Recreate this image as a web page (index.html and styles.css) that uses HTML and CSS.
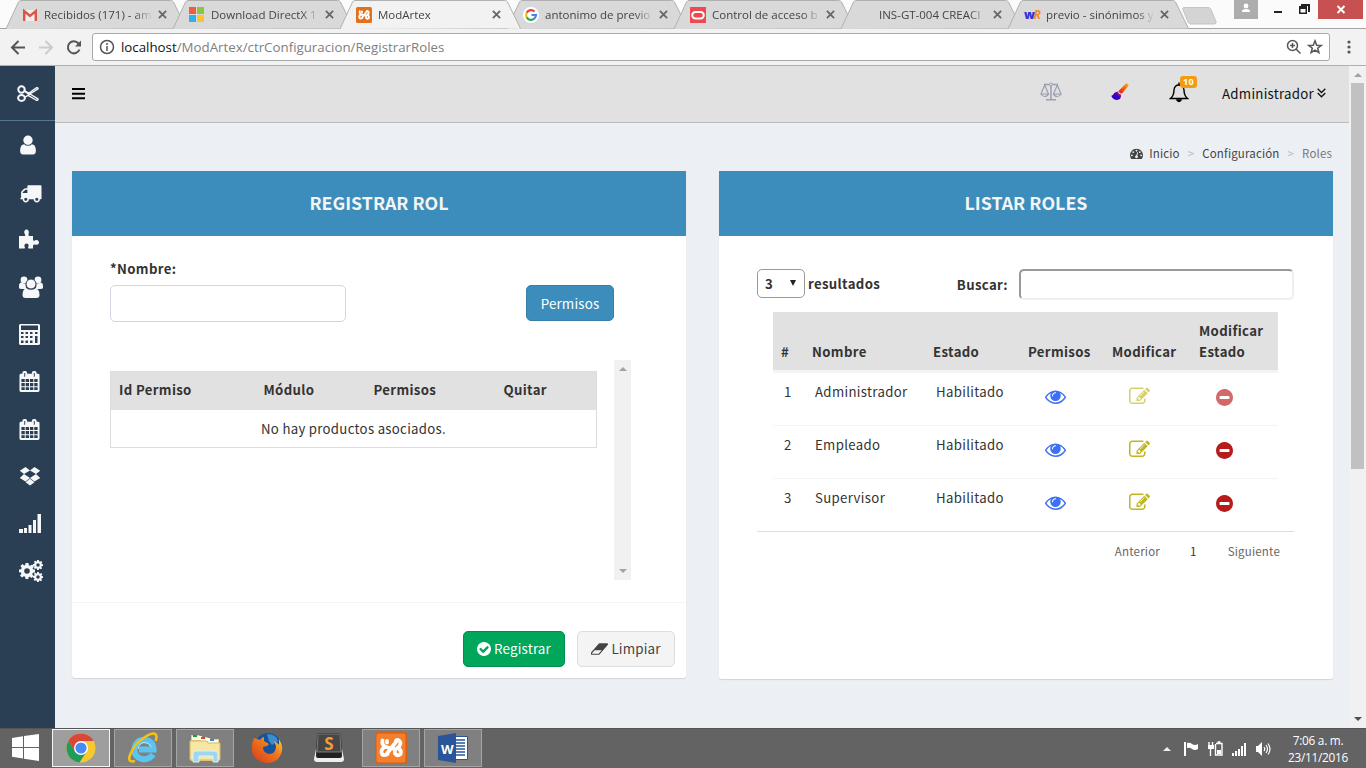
FILE: index.html
```html
<!DOCTYPE html>
<html lang="es">
<head>
<meta charset="utf-8">
<title>ModArtex</title>
<link rel="stylesheet" href="styles.css">
</head>
<body>
<svg class="defs" width="0" height="0">
  <defs>
    <symbol id="tab" viewBox="0 0 182 29"><path d="M0 29L12.500 2Q13.500 .5 15 .5H164.500Q166.500 .5 167.500 2L180.500 28.500"/></symbol>
    <symbol id="close" viewBox="0 0 10 10"><path d="M1 1L9 9M9 1L1 9"/></symbol>
    <symbol id="user" viewBox="0 0 1792 1792"><path d="M1536 1399q0 109-62.500 187t-150.500 78h-854q-88 0-150.500-78t-62.500-187q0-85 8.500-160.500t31.500-152 58.500-131 94-89 134.500-34.500q131 128 313 128t313-128q76 0 134.500 34.500t94 89 58.500 131 31.500 152 8.500 160.500zm-256-887q0 159-112.500 271.500t-271.500 112.500-271.500-112.500-112.500-271.500 112.500-271.500 271.500-112.500 271.500 112.500 112.500 271.500z"/></symbol>
    <symbol id="truck" viewBox="0 0 1792 1792"><path d="M640 1408q0-52-38-90t-90-38-90 38-38 90 38 90 90 38 90-38 38-90zm-384-512h384v-256h-158q-13 0-22 9l-195 195q-9 9-9 22v30zm1280 512q0-52-38-90t-90-38-90 38-38 90 38 90 90 38 90-38 38-90zm256-1088v1024q0 15-4 26.500t-13.500 18.500-16.500 11.500-23.500 6-22.500 2-25.500 0-22.500-.5q0 106-75 181t-181 75-181-75-75-181h-384q0 106-75 181t-181 75-181-75-75-181h-64q-3 0-22.500.5t-25.500 0-22.500-2-23.500-6-16.500-11.500-13.500-18.500-4-26.500q0-26 19-45t45-19v-320q0-8-.5-35t0-38 2.500-34.500 6.500-37 14-30.500 22.500-30l198-198q19-19 50.500-32t58.500-13h160v-192q0-26 19-45t45-19h1024q26 0 45 19t19 45z"/></symbol>
    <symbol id="calendar" viewBox="0 0 21 22"><path fill-rule="evenodd" d="M1.500 3H3V2Q3 0 5 0H6Q8 0 8 2V3H13V2Q13 0 15 0H16Q18 0 18 2V3H19.500Q21 3 21 4.500V20.500Q21 22 19.500 22H1.500Q0 22 0 20.500V4.500Q0 3 1.500 3ZM5 2V6H6V2ZM15 2V6H16V2ZM2 8.500H5.500V11.500H2ZM6.500 8.500H10V11.500H6.500ZM11 8.500H14.500V11.500H11ZM15.500 8.500H19V11.500H15.500ZM2 12.500H5.500V16H2ZM6.500 12.500H10V16H6.500ZM11 12.500H14.500V16H11ZM15.500 12.500H19V16H15.500ZM2 17H5.500V20H2ZM6.500 17H10V20H6.500ZM11 17H14.500V20H11ZM15.500 17H19V20H15.500Z"/></symbol>
    <symbol id="eye" viewBox="0 0 1792 1792"><path d="M1664 960q-152-236-381-353 61 104 61 225 0 185-131.500 316.500t-316.500 131.500-316.500-131.500-131.500-316.500q0-121 61-225-229 117-381 353 133 205 333.500 326.500t434.500 121.500 434.500-121.500 333.500-326.500zm-720-384q0-20-14-34t-34-14q-125 0-214.500 89.500t-89.500 214.500q0 20 14 34t34 14 34-14 14-34q0-86 61-147t147-61q20 0 34-14t14-34zm848 384q0 34-20 69-140 230-376.500 368.500t-499.500 138.500-499.500-139-376.500-368q-20-35-20-69t20-69q140-229 376.500-368t499.500-139 499.500 139 376.500 368q20 35 20 69z"/></symbol>
    <symbol id="edit" viewBox="0 0 1792 1792"><path d="M888 1184l116-116-152-152-116 116v56h96v96h56zm440-720q-16-16-33 1l-350 350q-17 17-1 33t33-1l350-350q17-17 1-33zm80 594v190q0 119-84.500 203.500t-203.500 84.500h-832q-119 0-203.500-84.500t-84.500-203.500v-832q0-119 84.500-203.500t203.500-84.500h832q63 0 117 25 15 7 18 23 3 17-9 29l-49 49q-14 14-32 8-23-6-45-6h-832q-66 0-113 47t-47 113v832q0 66 47 113t113 47h832q66 0 113-47t47-113v-126q0-13 9-22l64-64q15-15 35-7t20 29zm-96-738l288 288-672 672h-288v-288zm444 132l-92 92-288-288 92-92q28-28 68-28t68 28l152 152q28 28 28 68t-28 68z"/></symbol>
    <symbol id="minus" viewBox="128 128 1536 1536"><path d="M1344 960v-128q0-26-19-45t-45-19h-768q-26 0-45 19t-19 45v128q0 26 19 45t45 19h768q26 0 45-19t19-45zm320-64q0 209-103 385.500t-279.500 279.500-385.500 103-385.500-103-279.500-279.500-103-385.500 103-385.500 279.500-279.500 385.500-103 385.500 103 279.500 279.500 103 385.500z"/></symbol>
    <symbol id="gear" viewBox="-10 -10 20 20"><path fill-rule="evenodd" d="M-1.800-10H1.800L2.300-7.300 4-6.600 6.400-8.200 8.800-5.700 7-3.500 7.500-2.100 10-1.700V1.800L7.300 2.300 6.600 4 8.200 6.300 5.700 8.700 3.500 7.100 2 7.500 1.700 10H-1.800L-2.300 7.300-4 6.600-6.300 8.200-8.700 5.700-7 3.500-7.500 2-10 1.700V-1.800L-7.300-2.300-6.600-4-8.200-6.300-5.700-8.700-3.500-7-2.200-7.500ZM0-3.500A3.500 3.500 0 1 0 0 3.500A3.500 3.500 0 1 0 0-3.500Z"/></symbol>
    <symbol id="xampp" viewBox="0 0 32 32"><path d="M12 10.500V9M7.500 8.500Q6.500 13 10.500 15L20 17M12 21.500L21 10M10.500 15Q6 16.500 6.500 20.500Q7.500 25 12.500 22M20 17L20 21.500M21 10Q20.500 7.500 23 8Q27 10 24.500 14L22.500 16Q27 18 25.500 22Q22.500 25 20 21.500" fill="none" stroke="#fff" stroke-width="3.800" stroke-linecap="round" stroke-linejoin="round"/></symbol>
    <linearGradient id="fire" x1="0" y1="1" x2="1" y2="0"><stop offset=".3" stop-color="#30c"/><stop offset=".45" stop-color="#d02040"/><stop offset=".65" stop-color="#ff4a00"/><stop offset="1" stop-color="#ffb400"/></linearGradient>
    <linearGradient id="fox" x1="0" y1="1" x2="1" y2="0"><stop offset="0" stop-color="#d6381a"/><stop offset=".6" stop-color="#f07a1c"/><stop offset="1" stop-color="#ffd83a"/></linearGradient>
  </defs>
</svg>

<div class="browser">
  <div class="tabstrip">
    <div class="tab"><svg class="tab-shape"><use href="#tab"/></svg>
      <svg class="favicon" viewBox="0 0 16 16"><path fill="#f2eded" d="M1 3H15V14H1Z"/><path fill="none" stroke="#d9564a" stroke-width="2.400" d="M2.200 14V4L8 9 13.800 4V14"/></svg>
      <span class="tab-title">Recibidos (171) - am</span><svg class="tab-close"><use href="#close"/></svg></div>
    <div class="tab"><svg class="tab-shape"><use href="#tab"/></svg>
      <svg class="favicon" viewBox="0 0 16 16"><path fill="#f25b40" d="M0 0h7v7H0z"/><path fill="#8cc63e" d="M8 0h7v7H8z"/><path fill="#2fb1ef" d="M0 8h7v7H0z"/><path fill="#fdc42f" d="M8 8h7v7H8z"/></svg>
      <span class="tab-title">Download DirectX 1</span><svg class="tab-close"><use href="#close"/></svg></div>
    <div class="tab tab-active"><svg class="tab-shape"><use href="#tab"/></svg>
      <svg class="favicon" viewBox="0 0 32 32"><rect width="32" height="32" rx="3" fill="#e5701c"/><use href="#xampp"/></svg>
      <span class="tab-title">ModArtex</span><svg class="tab-close"><use href="#close"/></svg></div>
    <div class="tab"><svg class="tab-shape"><use href="#tab"/></svg>
      <svg class="favicon" viewBox="0 0 16 16"><circle cx="8" cy="8" r="8" fill="#fff"/><g fill="none" stroke-width="2.200"><path stroke="#ea4335" d="M3.700 5.700A5 5 0 0 1 11.500 4.500"/><path stroke="#fbbc05" d="M3.700 5.700A5 5 0 0 0 3.700 10.400"/><path stroke="#34a853" d="M3.700 10.400A5 5 0 0 0 11.300 11.700"/><path stroke="#4285f4" d="M11.300 11.700A5 5 0 0 0 13 8H8.500"/></g></svg>
      <span class="tab-title">antonimo de previo</span><svg class="tab-close"><use href="#close"/></svg></div>
    <div class="tab"><svg class="tab-shape"><use href="#tab"/></svg>
      <svg class="favicon" viewBox="0 0 16 16"><path fill="#ee4850" d="M0 0h16v16H0z"/><rect x="2.200" y="5" width="11.600" height="6.400" rx="3.200" fill="none" stroke="#fff" stroke-width="2"/></svg>
      <span class="tab-title">Control de acceso b</span><svg class="tab-close"><use href="#close"/></svg></div>
    <div class="tab"><svg class="tab-shape"><use href="#tab"/></svg>
      <span class="favicon"></span>
      <span class="tab-title">INS-GT-004 CREACI</span><svg class="tab-close"><use href="#close"/></svg></div>
    <div class="tab"><svg class="tab-shape"><use href="#tab"/></svg>
      <span class="favicon favicon-wr"><b>w</b><i>R</i></span>
      <span class="tab-title">previo - sinónimos y</span><svg class="tab-close"><use href="#close"/></svg></div>
    <svg class="new-tab" viewBox="0 0 36 18"><path d="M1.500 .5H26Q28 .5 29 2.500L34 14.500Q34.500 17 32.500 17H9Q7 17 6 15L.8 2.500Q.5 .5 1.500 .5Z"/></svg>
    <div class="window-controls">
      <svg class="profile" viewBox="0 0 24 19"><circle cx="12" cy="6" r="2.400"/><path d="M8 12V11Q8 9 12 9T16 11V12Z"/></svg>
      <svg class="wc" viewBox="0 0 60 19"><path d="M16 11h8v2H16zM43 4h9v8H50V6H43zM41 6h8v8H41zM42.500 9v3.500h5V9z" fill-rule="evenodd"/></svg>
      <svg class="wc-close" viewBox="0 0 45 19"><path d="M19.500 6L26.500 13M26.500 6L19.500 13"/></svg>
    </div>
  </div>
  <div class="toolbar">
    <svg class="nav-icons" viewBox="0 0 92 37"><g fill="none" stroke-width="2"><path stroke="#555" d="M25 18.500H12.500M18.500 12L12 18.500L18.500 25"/><path stroke="#ccc" d="M39 18.500H51.500M45.500 12L52 18.500L45.500 25"/><path stroke="#555" d="M78.500 14.500A6 6 0 1 0 79.500 20.500"/></g><path fill="#555" d="M81 11.500V17.500H75Z"/></svg>
    <div class="omnibox">
      <svg class="info" viewBox="0 0 16 16"><circle cx="8" cy="8" r="6.500"/><path d="M8 7V12M8 4V6"/></svg>
      <span class="url">localhost<span>/ModArtex/ctrConfiguracion/RegistrarRoles</span></span>
      <svg class="omni-icons" viewBox="0 0 40 18"><g fill="none" stroke="#555" stroke-width="1.500"><circle cx="7.500" cy="7.500" r="5"/><path d="M11 11L15.500 15.500M5 7.500H10M7.500 5V10"/><path d="M30 2.800L31.700 7.200 36.300 7.400 32.700 10.200 33.900 14.700 30 12.200 26.100 14.700 27.300 10.200 23.700 7.400 28.300 7.200Z"/></g></svg>
    </div>
    <svg class="menu-dots" viewBox="0 0 4 16"><circle cx="2" cy="3" r="1.600"/><circle cx="2" cy="8" r="1.600"/><circle cx="2" cy="13" r="1.600"/></svg>
  </div>
</div>

<div class="page">
  <nav class="sidebar">
    <div class="brand"><svg width="22" height="18" viewBox="0 0 22 18" fill="none" stroke="#f5f7f9" stroke-width="2"><circle cx="4.500" cy="4.500" r="3.200"/><ellipse cx="4.500" cy="13" rx="3.400" ry="3"/><path stroke-width="1.400" d="M7 6L11 8.700 19 3Q21 2 21 3.800L13 9 21 14Q21 16 19 15L11 10.300 7.500 12.500M7.500 5.500L13 9M7.500 12.500L13 9"/></svg></div>
    <div class="side-item"><svg width="22" height="22" class="shift"><use href="#user"/></svg></div>
    <div class="side-item"><svg width="23" height="22" class="shift"><use href="#truck"/></svg></div>
    <div class="side-item"><svg width="20" height="20" viewBox="0 0 20 20"><path d="M0 7H5.500Q7 7 6 5.500C4.500 3 5.500.5 7.500.5S10.500 3 9.500 5Q9 7 10.500 7H14V10.500Q14 12.500 16 11.500C18 10.500 20 11.500 20 13.500S18 16 16 15.500Q14 15 14 17V19.500H9.500Q8.500 19 9.500 17.500C10 15.500 9 14.500 7.500 14.500S5 16 5.500 17.500Q6.500 19 5.500 19.500H0Z"/></svg></div>
    <div class="side-item"><svg width="24" height="22" viewBox="0 0 24 22"><circle cx="5" cy="4" r="3.400"/><circle cx="19" cy="4" r="3.400"/><path d="M0 12V10Q0 6.500 2.500 6.500Q4.500 8 7 7.500Q6 11 8 13H3Q0 13 0 12ZM24 12V10Q24 6.500 21.500 6.500Q19.500 8 17 7.500Q18 11 16 13H21Q24 13 24 12Z"/><circle cx="12" cy="8" r="5" stroke="#2a3f54"/><path d="M7.500 12.500Q12 15 16.500 12.500Q20.500 12.500 20.500 19Q20.500 22 17.500 22H6.500Q3.500 22 3.500 19Q3.500 12.500 7.500 12.500Z"/></svg></div>
    <div class="side-item"><svg width="21" height="21" viewBox="0 0 21 21"><path fill-rule="evenodd" d="M1 0H20L21 1V20L20 21H1L0 20V1ZM2 1.500V6H19V1.500ZM2 8V10H4.500V8ZM6.500 8V10H9V8ZM11 8V10H13.500V8ZM16 8V10H18.500V8ZM2 12V14H4.500V12ZM6.500 12V14H9V12ZM11 12V14H13.500V12ZM16 12V19H18.500V12ZM2 16.500V19H4.500V16.500ZM6.500 16.500V19H9V16.500ZM11 16.500V19H13.500V16.500Z"/></svg></div>
    <div class="side-item"><svg width="21" height="21"><use href="#calendar"/></svg></div>
    <div class="side-item"><svg width="21" height="21"><use href="#calendar"/></svg></div>
    <div class="side-item"><svg width="22" height="20" viewBox="0 0 22 20"><path d="M6.500 1L11 4.500 5 8 .8 4.700ZM15.500 1L21.200 4.700 17 8 11 4.500ZM5 8L11 12 6.500 15.500.8 12ZM17 8L21.200 12 15.500 15.500 11 12ZM6.500 16.300L11 12.800 15.500 16.300 11 19.500Z"/></svg></div>
    <div class="side-item"><svg width="22" height="19" viewBox="0 0 22 19"><path d="M0 15H4V19H0ZM5 14H8V19H5ZM9.500 11H12.500V19H9.500ZM14 6H17V19H14ZM18.500 0H22V19H18.500Z"/></svg></div>
    <div class="side-item"><svg width="24" height="22" viewBox="0 0 24 22"><use href="#gear" x="0" y="3" width="16" height="16"/><use href="#gear" x="14" y="0" width="10" height="10"/><use href="#gear" x="14" y="12" width="10" height="10"/></svg></div>
  </nav>

  <div class="main">
    <header class="topbar">
      <svg class="burger" viewBox="0 0 13 12"><path d="M0 0h13v2H0zM0 4.700h13v2H0zM0 9.300h13v2H0z"/></svg>
      <div class="top-tools">
        <svg width="22" height="20" viewBox="0 0 22 20" fill="none" stroke="#9aa0b3"><path stroke-width="1.500" d="M4 2.500H9.500M12.500 2.500H18M11 3.500V17M6 17.800H16"/><circle cx="11" cy="2.500" r="1.500"/><path stroke-width="1.200" d="M4.700 3L1 12H8.500ZM17.300 3L13.500 12H21ZM.7 12Q4.700 17 8.800 12M13.200 12Q17.300 17 21.300 12"/></svg>
        <svg width="18" height="18" viewBox="0 0 18 18" fill="url(#fire)"><path d="M15 .5Q18 0 17.300 3L11 10.500Q8.500 10.500 7.500 8ZM6.800 8.500Q7.500 11 10 11.500Q10.500 15 8 16.500Q3 18 .5 13.500Q0 12 2 12Q3 9 6.800 8.500Z"/></svg>
        <span class="bell"><svg width="20" height="21" viewBox="0 0 20 21" fill="none" stroke="#000" stroke-width="1.400"><path d="M10 3Q14.500 3 15 8Q15 13.500 18.500 16.500H1.500Q5 13.500 5 8Q5.500 3 10 3Z"/><path d="M10 3V.5"/><path fill="#000" d="M8 18Q10 21 12 18Z"/></svg><span class="badge">10</span></span>
        <span class="admin">Administrador <svg width="9" height="10" viewBox="0 0 9 10"><path d="M.7.700L4.500 4.500 8.300.700M.7 5L4.500 8.800 8.300 5"/></svg></span>
      </div>
    </header>
    <div class="crumbs">
      <svg viewBox="0 0 1792 1792"><path d="M384 1152q0-53-37.500-90.500t-90.500-37.500-90.500 37.500-37.500 90.500 37.500 90.500 90.500 37.500 90.500-37.500 37.500-90.500zm192-448q0-53-37.500-90.500t-90.500-37.500-90.500 37.500-37.500 90.500 37.500 90.500 90.500 37.500 90.500-37.500 37.500-90.500zm428 481l101-382q6-26-7.500-48.500t-38.500-29.500-48 6.500-30 39.500l-101 382q-60 5-107 43.500t-63 98.500q-20 77 20 146t117 89 146-20 89-117q16-60-6-117t-72-91zm660-33q0-53-37.500-90.500t-90.500-37.500-90.500 37.500-37.500 90.500 37.500 90.500 90.500 37.500 90.500-37.500 37.500-90.500zm-640-640q0-53-37.500-90.500t-90.500-37.500-90.500 37.500-37.500 90.500 37.500 90.500 90.500 37.500 90.500-37.500 37.500-90.500zm448 192q0-53-37.500-90.500t-90.500-37.500-90.500 37.500-37.500 90.500 37.500 90.500 90.500 37.500 90.500-37.500 37.500-90.500zm320 448q0 261-141 483-19 29-54 29h-1402q-35 0-54-29-141-221-141-483 0-182 71-348t191-286 286-191 348-71 348 71 286 191 191 286 71 348z"/></svg>
      <span>Inicio</span><i>&gt;</i><span>Configuración</span><i>&gt;</i><span class="current">Roles</span>
    </div>
    <div class="boxes">
      <section class="box box-form">
        <h3 class="box-title">REGISTRAR ROL</h3>
        <div class="form-body">
          <label class="label">*Nombre:</label>
          <div class="form-row"><input class="field"><button class="btn btn-primary">Permisos</button></div>
          <div class="scroll-pane">
            <table class="perm-table">
              <colgroup><col class="p1"><col class="p2"><col class="p3"><col class="p4"></colgroup>
              <tr><th>Id Permiso</th><th>Módulo</th><th>Permisos</th><th>Quitar</th></tr>
              <tr><td colspan="4">No hay productos asociados.</td></tr>
            </table>
            <div class="scrollbar scrollbar-idle"><b class="arrow-up"></b><b class="arrow-down"></b></div>
          </div>
        </div>
        <div class="form-footer">
          <button class="btn btn-success"><svg viewBox="128 128 1536 1536"><path d="M1412 734q0-28-18-46l-91-90q-19-19-45-19t-45 19l-408 407-226-226q-19-19-45-19t-45 19l-91 90q-18 18-18 46 0 27 18 45l362 362q19 19 45 19 27 0 46-19l543-543q18-18 18-45zm252 162q0 209-103 385.500t-279.500 279.500-385.500 103-385.500-103-279.500-279.500-103-385.500 103-385.500 279.500-279.500 385.500-103 385.500 103 279.500 279.500 103 385.500z"/></svg>Registrar</button>
          <button class="btn btn-default"><svg class="eraser" viewBox="0 256 1856 1280"><path d="M832 1408l336-384h-768l-336 384h768zm1013-1077q15 34 9.500 71.500t-30.500 65.500l-896 1024q-38 44-96 44h-768q-38 0-69.500-20.500t-47.500-54.500q-15-34-9.500-71.500t30.500-65.500l896-1024q38-44 96-44h768q38 0 69.500 20.500t47.500 54.500z"/></svg>Limpiar</button>
        </div>
      </section>
      <section class="box box-list">
        <h3 class="box-title">LISTAR ROLES</h3>
        <div class="list-body">
          <div class="list-tools">
            <div class="select">3<b></b></div><span class="results">resultados</span>
            <label class="search-label">Buscar:</label><input class="search">
          </div>
          <table class="roles">
            <colgroup><col class="c1"><col class="c2"><col class="c3"><col class="c4"><col class="c5"><col class="c6"></colgroup>
            <thead><tr><th>#</th><th>Nombre</th><th>Estado</th><th>Permisos</th><th>Modificar</th><th>Modificar Estado</th></tr></thead>
            <tbody>
              <tr class="faded"><td>1</td><td>Administrador</td><td>Habilitado</td><td><svg class="eye"><use href="#eye"/></svg></td><td><svg class="edit"><use href="#edit"/></svg></td><td><svg class="minus"><use href="#minus"/></svg></td></tr>
              <tr><td>2</td><td>Empleado</td><td>Habilitado</td><td><svg class="eye"><use href="#eye"/></svg></td><td><svg class="edit"><use href="#edit"/></svg></td><td><svg class="minus"><use href="#minus"/></svg></td></tr>
              <tr><td>3</td><td>Supervisor</td><td>Habilitado</td><td><svg class="eye"><use href="#eye"/></svg></td><td><svg class="edit"><use href="#edit"/></svg></td><td><svg class="minus"><use href="#minus"/></svg></td></tr>
            </tbody>
          </table>
          <div class="pager"><span>Anterior</span><span class="page-no">1</span><span>Siguiente</span></div>
        </div>
      </section>
    </div>
  </div>
  <div class="scrollbar"><b class="arrow-up"></b><div class="thumb"></div><b class="arrow-down dark"></b></div>
</div>

<div class="taskbar">
  <div class="start"><svg width="27" height="27" viewBox="0 0 27 27" fill="#fff"><path d="M0 4L11 2.300V13H0ZM12 2.100L27 0V13H12ZM0 14H11V24.500L0 22.800ZM12 14H27V27L12 24.700Z"/></svg></div>
  <div class="task task-open task-current"><svg width="30" height="30" viewBox="-15 -15 30 30"><circle r="14.500" fill="#f7c832"/><path fill="#1f9d58" d="M-12.600-7.200A14.500 14.500 0 0 0-1.500 14.500L6 3-6 3Z"/><path fill="#d9473a" d="M-12.600-7.200L-6 3.500 0-7H12.700A14.500 14.500 0 0 0-12.600-7.200Z"/><circle r="7" fill="#fff"/><circle r="5.600" fill="#4a8af4"/></svg></div>
  <div class="task task-open"><svg width="32" height="32" viewBox="0 0 32 32" fill="none"><path stroke="#5cc4f0" stroke-width="6" d="M26 22.500Q22 28 15 27Q7 25 7.500 17Q9 8 17 8Q26 8.500 26.500 17.500H12"/><path stroke="#bfeaff" stroke-width="1" d="M11 17Q12 11 17 10.500Q23 11 24 15"/><path stroke="#f5c211" stroke-width="2.500" d="M8 29Q0 31 3 23Q7 12 18 5Q29-2 29.500 5Q29.500 7 28.500 9"/></svg></div>
  <div class="task task-open"><svg width="34" height="32" viewBox="0 0 34 32"><path fill="#e9cf7a" d="M3 3H11L13 5H19L21 7H31V29H3Z"/><path fill="#fffbe8" d="M4 4h10v4H4zM13 6h9v3h-9zM20 8h10v3H20z"/><path fill="#18a030" d="M5 3h4v2H5z"/><path fill="#e0452e" d="M13 5h4v2h-4z"/><path fill="#2890e0" d="M22 7h4v2h-4z"/><path fill="#f8e7a4" stroke="#d5ba62" d="M2 9H18L20 11H32V28H2Z"/><path fill="#9ed5ef" stroke="#d8f2fd" d="M5 30V22Q5 19 8 19H26Q30 19 30 22V30H25V24H11V30Z"/></svg></div>
  <div class="task"><svg width="32" height="32" viewBox="-16 -16 32 32"><circle cx="1" cy="-2" r="13" fill="#17539a"/><path fill="#3d8ed0" d="M0-14Q9-14 11-7L5-3 2-7Z"/><path fill="url(#fox)" d="M-13-10Q-9-9-7-8Q-5-11-3-11L-3-7 2-4 0-2-4-1Q-4 6 3 6Q9 5 9-2L7-7Q11-5 12-3L12-9Q16-3 15 3Q12 15 0 15Q-12 14-15 4Q-16-4-13-10Z"/></svg></div>
  <div class="task"><svg width="32" height="30" viewBox="0 0 32 30"><path fill="#eee" d="M3 16L1 26Q1 29 4 29H28Q31 29 31 26L29 16Z"/><path fill="#222" d="M4 2Q4 0 6 0H26Q28 0 28 2L29 23Q29 25 27 25H5Q3 25 3 23Z"/><path fill="#464646" stroke="#999" stroke-width=".7" d="M5 1H27L28 19H4Z"/></svg><span class="sublime">S</span></div>
  <div class="task task-open"><svg width="32" height="32" viewBox="0 0 32 32"><rect width="32" height="32" rx="3" fill="#d85f13"/><rect x="1.500" y="1.500" width="29" height="29" rx="2" fill="#f2802c"/><use href="#xampp"/></svg></div>
  <div class="task task-open"><svg width="32" height="32" viewBox="0 0 32 32"><path fill="#fff" stroke="#2a5699" d="M17 4.500H30.500V27.500H17Z"/><path stroke="#2a5699" stroke-width="1.300" d="M19 8H28M19 11H28M19 14H28M19 17H28M19 20H28M19 23H28"/><path fill="#2a5699" d="M1 4L19 1V31L1 28Z"/></svg><span class="word">W</span></div>
  <div class="tray">
    <svg width="116" height="20" viewBox="0 0 116 20"><path fill="#eef" d="M1 12L5 8 9 12Z"/><path fill="#fff" d="M22 3H24V17H22ZM25 4Q28 3 30 5Q33 7 36 5V10Q33 12 30 10Q28 8 25 9Z"/><path fill="none" stroke="#fff" stroke-width="1.400" d="M54 4.500H60V16H53.500V5M55.500 3H58.500M48.500 9V17M47 3V6M50.500 3V6"/><path fill="#fff" d="M46 6h6v4h-6zM55 11h4v4h-4z"/><path fill="#fff" d="M70 14h2v3h-2zM73 12h2v5h-2zM76 10h2v7h-2zM79 7h2v10h-2zM82 4h2v13h-2zM94 7H96L100 3V17L96 13H94Z"/><path fill="none" stroke="#fff" stroke-width="1.200" d="M102 8Q103.500 10 102 12M104 6Q107 10 104 14M106 4.500Q110 10 106 15.500"/></svg>
    <div class="clock">7:06 a. m.<br>23/11/2016</div>
  </div>
</div>
</body>
</html>
```
FILE: styles.css
```css
* { box-sizing: border-box; }
body { margin: 0; width: 1366px; height: 768px; overflow: hidden; display: flex; flex-direction: column; font: 13.2px/21px "Noto Sans CJK SC", "Noto Sans", sans-serif; letter-spacing: .35px; color: #333; background: #ecf0f5; }
svg { display: block; flex: none; }
.defs { position: absolute; }
input, button { font: inherit; letter-spacing: inherit; padding: 0; background: #fff; }

.browser { height: 66px; flex: none; font-family: "Open Sans", sans-serif; letter-spacing: 0; background: #f2f2f2; }
.tabstrip { display: flex; height: 29px; padding-left: 6px; background: #fbfbfb; border-bottom: 1px solid #a5a5a5; }
.tab { position: relative; width: 167px; height: 29px; display: flex; align-items: center; padding-left: 16px; flex: none; }
.tab-shape { position: absolute; left: 0; top: 0; width: 182px; height: 29px; fill: #d9d9d9; stroke: #b0b0b0; }
.tab-active { z-index: 2; }
.tab-active .tab-shape { fill: #f2f2f2; }
.favicon { position: relative; width: 16px; height: 16px; flex: none; }
.favicon-wr { font: 700 12px/16px "Open Sans", sans-serif; letter-spacing: -1.5px; color: #33d; }
.favicon-wr i { color: #f08a2c; }
.tab-title { position: relative; width: 110px; margin-left: 6px; font-size: 11.5px; line-height: 18px; white-space: nowrap; color: #444; -webkit-mask-image: linear-gradient(90deg, #000 82%, transparent 99%); mask-image: linear-gradient(90deg, #000 82%, transparent 99%); }
.tab-close { position: relative; width: 9px; height: 9px; margin-left: 4px; stroke: #666; stroke-width: 2; }
.new-tab { width: 36px; height: 18px; margin: 7px 0 0 7px; fill: #d4d4d4; stroke: #c5c5c5; }
.window-controls { display: flex; margin-left: auto; height: 19px; }
.profile { width: 24px; height: 19px; background: #adadad; fill: #fff; }
.wc { width: 60px; height: 19px; fill: #222; }
.wc-close { width: 45px; height: 19px; background: #c75050; stroke: #fff; stroke-width: 2; margin-right: 3px; }
.toolbar { display: flex; align-items: center; height: 37px; border-bottom: 1px solid #b0b0b0; }
.nav-icons { width: 92px; height: 37px; }
.omnibox { display: flex; align-items: center; width: 1238px; height: 28px; padding-left: 6px; background: #fff; border: 1px solid #a9a9a9; border-radius: 3px; }
.info { width: 16px; height: 16px; fill: none; stroke: #555; stroke-width: 1.500; }
.url { margin-left: 6px; font-size: 13.3px; color: #111; }
.url span { color: #808080; }
.omni-icons { width: 40px; height: 18px; margin-left: auto; margin-right: 4px; }
.menu-dots { width: 4px; height: 16px; margin-left: 17px; fill: #555; }

.page { display: flex; height: 662px; flex: none; }
.sidebar { width: 55px; background: #2a3f54; fill: #f5f7f9; }
.brand { height: 55px; padding: 19px 0 0 17px; border-bottom: 1px solid #56758f; }
.side-item { height: 47.400px; padding-left: 19px; display: flex; align-items: center; }
.shift { margin-left: -2px; }
.side-item:nth-child(3) .shift { margin-left: 0; margin-top: 1px; }
.main { width: 1294px; }
.topbar { display: flex; align-items: center; height: 57px; padding: 0 23px 0 17px; background: #e1e1e1; border-bottom: 1px solid #bbb; }
.burger { width: 13px; height: 12px; }
.top-tools { display: flex; align-items: center; margin-left: auto; color: #111; font-size: 13.3px; letter-spacing: .25px; }
.top-tools > svg + svg { margin-left: 49px; }
.top-tools > svg { margin-top: -4px; }
.bell { position: relative; margin: -3px 0 0 40px; }
.badge { position: absolute; left: 11px; top: -6px; width: 17px; height: 12px; border-radius: 3px; background: #f39c12; color: #fff; font: 700 9px/12px "Open Sans", sans-serif; text-align: center; }
.admin { display: flex; align-items: center; gap: 3px; margin: -2px 0 0 33px; }
.admin svg { fill: none; stroke: #111; stroke-width: 1.300; }
.crumbs { display: flex; align-items: center; justify-content: flex-end; height: 48px; padding: 12px 17px 0 0; font-size: 11.5px; letter-spacing: .15px; color: #444; }
.crumbs svg { width: 13px; height: 13px; margin-right: 6px; fill: #444; }
.crumbs i { font-style: normal; color: #bbb; margin: 0 8px; }
.crumbs .current { color: #777; }
.boxes { display: flex; gap: 33px; padding-left: 17px; align-items: flex-start; }
.box { width: 614px; background: #fff; border-radius: 0 0 3px 3px; box-shadow: 0 1px 1px rgba(0,0,0,.12); }
.box-form { height: 507px; }
.box-list { height: 508px; }
.box-title { margin: 0; height: 65px; background: #3c8dbc; color: #f4f4f4; text-align: center; font-size: 17.8px; line-height: 63px; letter-spacing: 0; }
.form-body { height: 366px; padding: 22px 55px 0 38px; }
.label { display: block; font-weight: 700; }
.form-row { display: flex; justify-content: space-between; padding-right: 17px; margin-top: 6px; }
.field { width: 236px; height: 37px; border: 1px solid #d2d6de; border-radius: 5px; }
.btn { height: 36px; display: flex; align-items: center; justify-content: center; border: 1px solid; border-radius: 5px; font-size: 13.4px; letter-spacing: .15px; padding-bottom: 1px; }
.btn-primary { width: 88px; background: #3c8dbc; border-color: #367fa9; color: #fff; padding: 1px 0 0; }
.scroll-pane { display: flex; justify-content: space-between; height: 220px; margin-top: 38px; }
.perm-table { width: 487px; height: 77px; margin-top: 11px; table-layout: fixed; border-collapse: collapse; border: 1px solid #ddd; }
.perm-table .p1 { width: 145px; } .perm-table .p2 { width: 110px; } .perm-table .p3 { width: 130px; }
.perm-table th { height: 38px; padding: 0 8px 2px; background: #e1e1e1; text-align: left; }
.perm-table td { height: 38px; padding: 0; text-align: center; letter-spacing: .3px; }
.scrollbar { position: relative; width: 17px; background: #f1f1f1; display: flex; flex-direction: column; align-items: center; padding: 7px 0; }
.thumb { width: 13px; height: 386px; margin-top: 6px; background: #c1c1c1; }
.arrow-up { border: 4px solid transparent; border-top: 0; border-bottom-color: #a3a3a3; }
.arrow-down { margin-top: auto; border: 4px solid transparent; border-bottom: 0; border-top-color: #a3a3a3; }
.arrow-down.dark { border-top-color: #505050; }
.form-footer { display: flex; justify-content: flex-end; gap: 12px; padding: 28px 11px 0 0; border-top: 1px solid #f4f4f4; height: 76px; }
.btn-success { width: 102px; background: #00a65a; border-color: #008d4c; color: #fff; }
.btn-success svg { width: 14px; height: 14px; fill: #fff; margin-right: 3px; }
.btn-default { width: 98px; background: #f4f4f4; border-color: #ddd; color: #444; }
.eraser { width: 17px; height: 12px; fill: #444; margin-right: 3px; }
.list-body { padding: 33px 39px 0 38px; }
.list-tools { display: flex; height: 43px; align-items: flex-start; font-weight: 700; }
.select { display: flex; align-items: center; justify-content: space-between; width: 48px; height: 29px; padding: 0 8px 0 7px; border: 1px solid #999; border-radius: 5px; }
.select b { border: 3.500px solid transparent; border-bottom: 0; border-top: 6px solid #222; margin-top: -2px; }
.results { margin: 4px 0 0 3px; }
.search-label { margin: 5px 11px 0 auto; }
.search { width: 275px; height: 31px; border: 2px solid; border-color: #999 #eee #eee #999; border-radius: 5px; }
.roles { width: 505px; margin: 0 16px; table-layout: fixed; border-collapse: separate; border-spacing: 0; }
.c1 { width: 31px; } .c2 { width: 121px; } .c3 { width: 95px; } .c4 { width: 84px; } .c5 { width: 87px; } .c6 { width: 87px; }
.roles th { height: 61px; padding: 0 8px 8px; vertical-align: bottom; text-align: left; background: #e1e1e1; border-bottom: 3px solid #f4f4f4; }
.roles td { height: 53px; padding: 8px 0 0 11px; vertical-align: top; border-bottom: 1px solid #f4f4f4; letter-spacing: .35px; }
.roles tbody tr:last-child td { height: 52px; border-bottom: 0; }
.eye { width: 21px; height: 21px; margin: 5px 0 0 14px; fill: #3c70f5; }
.edit { width: 21px; height: 21px; margin: 5px 0 0 14px; fill: #bdb821; }
.minus { width: 17px; height: 17px; margin: 7.500px 0 0 14px; fill: #b71c1c; }
.faded .edit, .faded .minus { opacity: .65; }
.pager { display: flex; border-top: 1px solid #ddd; padding: 9px 14px 0; justify-content: flex-end; font-size: 11.500px; letter-spacing: .2px; color: #666; }
.page-no { margin: 0 31px 0 30px; color: #333; }

.taskbar { display: flex; height: 40px; flex: none; background: #636363; border-top: 1px solid #555; letter-spacing: 0; }
.start { width: 52px; padding: 5px 0 0 12px; }
.task { position: relative; width: 58px; height: 38px; margin-right: 4px; display: flex; align-items: center; justify-content: center; }
.task-open { background: #808080; border: 1px solid #a5a5a5; }
.task-current { background: #9e9e9e; border-color: #f5f5f5; }
.sublime, .word { position: absolute; font: 700 17px/20px "Open Sans", sans-serif; color: #f39a38; top: 5px; }
.word { color: #fff; font-size: 13px; left: 16px; top: 9px; }
.tray { display: flex; align-items: center; margin-left: auto; color: #fff; font: 11.8px/17px "Open Sans", sans-serif; }
.clock { width: 88px; padding-right: 8px; text-align: center; letter-spacing: -.25px; }
```
